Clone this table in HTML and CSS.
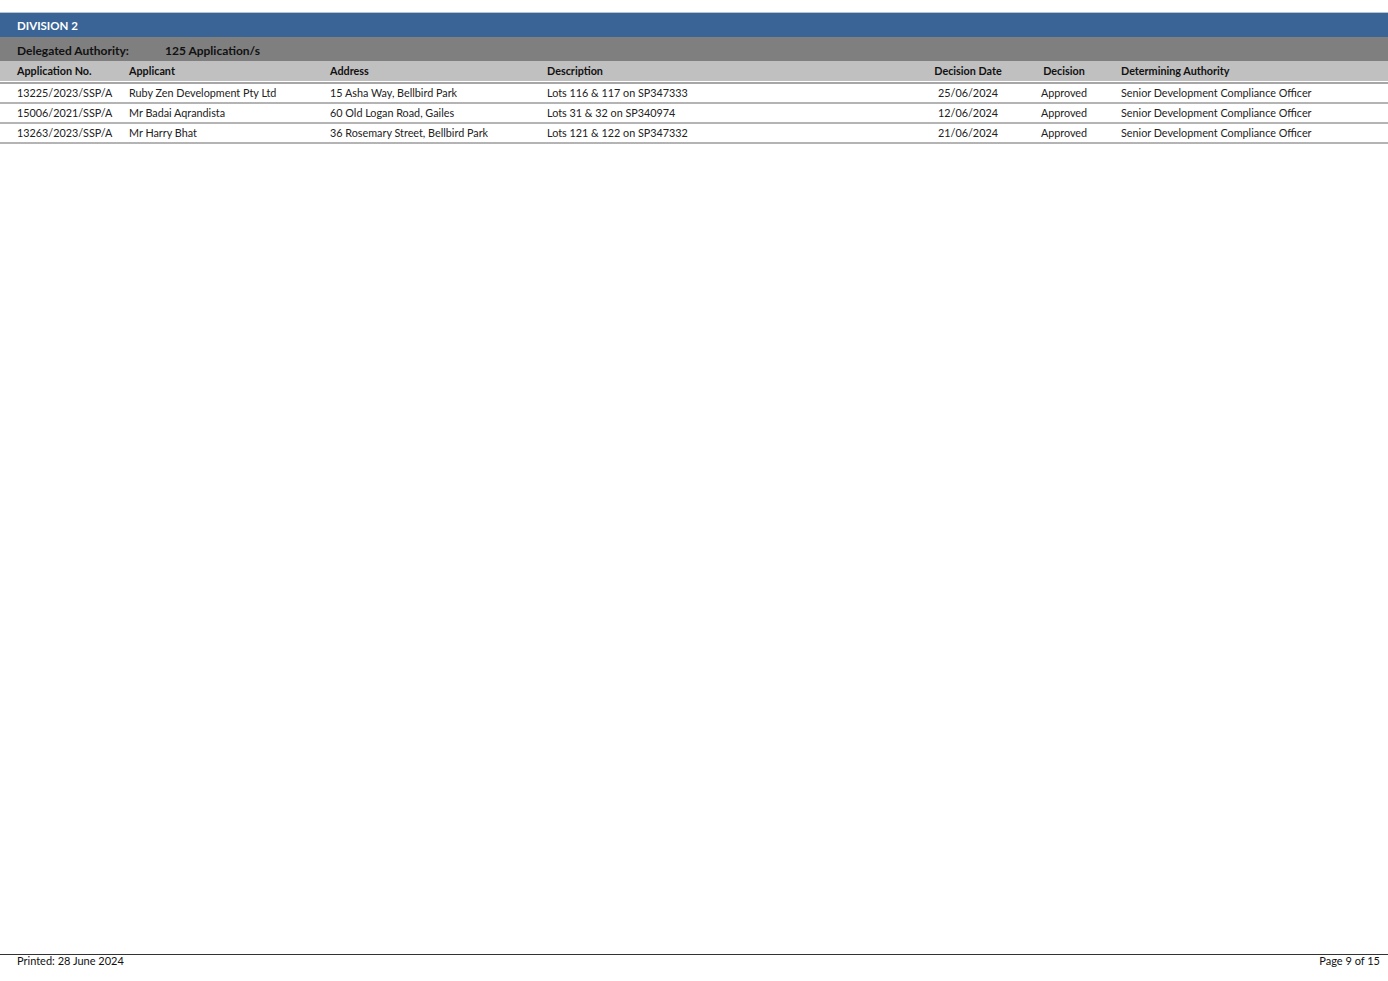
FILE: index.html
```html
<!DOCTYPE html>
<html>
<head>
<meta charset="utf-8">
<link rel="stylesheet" href="styles.css">
</head>
<body>
<div class="page">
  <div class="report">
    <div class="division">DIVISION 2</div>
    <div class="authority">
      <span class="auth-label">Delegated Authority:</span>
      <span class="auth-count">125 Application/s</span>
    </div>
    <table class="apps">
      <colgroup>
        <col class="c1"><col class="c2"><col class="c3"><col class="c4"><col class="c5"><col class="c6"><col class="c7">
      </colgroup>
      <thead>
        <tr>
          <th class="first">Application No.</th>
          <th>Applicant</th>
          <th>Address</th>
          <th>Description</th>
          <th class="center">Decision Date</th>
          <th class="center">Decision</th>
          <th class="last">Determining Authority</th>
        </tr>
      </thead>
      <tbody>
        <tr>
          <td class="first">13225/2023/SSP/A</td>
          <td>Ruby Zen Development Pty Ltd</td>
          <td>15 Asha Way, Bellbird Park</td>
          <td>Lots 116 &amp; 117 on SP347333</td>
          <td class="center">25/06/2024</td>
          <td class="center">Approved</td>
          <td class="last">Senior Development Compliance Officer</td>
        </tr>
        <tr>
          <td class="first">15006/2021/SSP/A</td>
          <td>Mr Badai Aqrandista</td>
          <td>60 Old Logan Road, Gailes</td>
          <td>Lots 31 &amp; 32 on SP340974</td>
          <td class="center">12/06/2024</td>
          <td class="center">Approved</td>
          <td class="last">Senior Development Compliance Officer</td>
        </tr>
        <tr>
          <td class="first">13263/2023/SSP/A</td>
          <td>Mr Harry Bhat</td>
          <td>36 Rosemary Street, Bellbird Park</td>
          <td>Lots 121 &amp; 122 on SP347332</td>
          <td class="center">21/06/2024</td>
          <td class="center">Approved</td>
          <td class="last">Senior Development Compliance Officer</td>
        </tr>
      </tbody>
    </table>
  </div>
  <div class="footer">
    <span>Printed: 28 June 2024</span>
    <span>Page 9 of 15</span>
  </div>
</div>
</body>
</html>
```

FILE: styles.css
```css
html, body {
  margin: 0;
  padding: 0;
  background: #ffffff;
}
body {
  font-family: "Lato", "Open Sans", sans-serif;
  font-size: 10.8px;
  color: #1a1a1a;
}
.page {
  width: 1388px;
  height: 981px;
  display: flex;
  flex-direction: column;
  justify-content: space-between;
}
.report {
  padding-top: 12px;
}
.division {
  height: 24px;
  line-height: 25px;
  background: #3a6496;
  border-top: 1px solid #b8c4d2;
  color: #ffffff;
  font-weight: 700;
  font-size: 11.5px;
  padding-left: 17px;
}
.authority {
  height: 24px;
  background: #7f7f7f;
  display: flex;
  align-items: center;
  padding: 2px 0 0 17px;
  font-weight: 700;
  font-size: 12px;
  color: #111111;
  box-sizing: border-box;
}
.auth-label {
  width: 148px;
}
.apps {
  width: 1388px;
  border-collapse: separate;
  border-spacing: 0;
  table-layout: fixed;
}
.c1 { width: 125px; }
.c2 { width: 201px; }
.c3 { width: 217px; }
.c4 { width: 375px; }
.c5 { width: 100px; }
.c6 { width: 92px; }
.c7 { width: 278px; }
.apps th, .apps td {
  text-align: left;
  white-space: nowrap;
  overflow: hidden;
  padding: 0 0 0 4px;
  vertical-align: middle;
}
.apps th {
  background: #c0c0c0;
  line-height: 20px;
  font-weight: 700;
  color: #111111;
  border-bottom: 1px solid #ffffff;
}
.apps tbody tr:first-child td {
  border-top: 2px solid #a6a6a6;
}
.apps td {
  line-height: 18px;
  border-bottom: 2px solid #b4b4b4;
  color: #222222;
}
.apps .first { padding-left: 17px; }
.apps .last { padding-left: 11px; }
.apps .center { text-align: center; padding-left: 0; }
.footer {
  border-top: 1px solid #333333;
  margin-bottom: 16px;
  height: 10px;
  display: flex;
  justify-content: space-between;
  padding: 0 8px 0 17px;
  line-height: 12px;
  font-size: 11px;
  color: #111111;
}
```
